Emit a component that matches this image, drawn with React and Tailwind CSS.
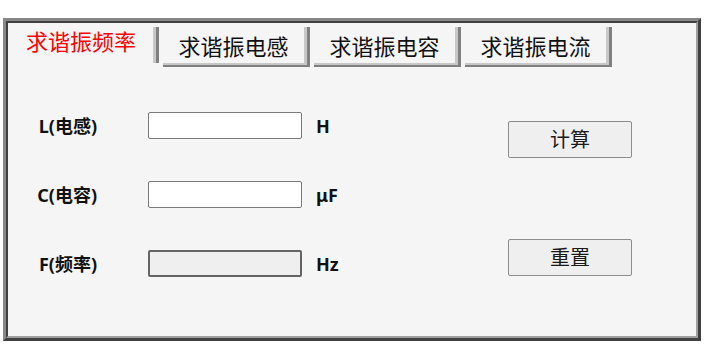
import React from "react";

const cjk = { fontFamily: '"Noto Sans", "Noto Sans CJK SC", sans-serif' };

const tabs = ["求谐振电感", "求谐振电容", "求谐振电流"];

const rows = [
  { label: "L(电感)", unit: "H", readOnly: false },
  { label: "C(电容)", unit: "μF", readOnly: false },
  { label: "F(频率)", unit: "Hz", readOnly: true },
];

function Tab({ text }) {
  return (
    <div className="w-[147px] h-[40px] border-r-[3px] border-b-[2px] border-[#808080]">
      <div className="h-full border-r-[3px] border-b-[2px] border-[#c8c8c8] flex items-start justify-center pt-[5px] text-[22px] leading-[28px] text-[#111]">
        {text}
      </div>
    </div>
  );
}

export default function App() {
  return (
    <div className="w-[704px] h-[350px] bg-white pt-[18px] pl-[3px]" style={cjk}>
      <div className="w-[698px] h-[323px] border-[3px] border-t-[#888888] border-l-[#888888] border-r-[#404040] border-b-[#404040]">
        <div className="h-full border-2 border-t-[#404040] border-l-[#404040] border-r-[#a0a0a0] border-b-[#a0a0a0] bg-[#f5f5f5]">
          {/* tab strip */}
          <div className="flex gap-[4px] pt-[4px] pl-[4px]">
            <div className="w-[147px] h-[36px] border-r-[3px] border-[#808080]">
              <div className="h-full border-r-[3px] border-[#c8c8c8] flex items-start justify-center pr-[3px] pt-[1px] text-[22px] leading-[26px] text-[#ff0000]">
                求谐振频率
              </div>
            </div>
            {tabs.map((t) => (
              <Tab key={t} text={t} />
            ))}
          </div>

          {/* form */}
          <div className="flex mt-[45px]">
            <div className="w-[500px] flex flex-col gap-[42px]">
              {rows.map((r) => (
                <div key={r.label} className="flex items-center h-[27px]">
                  <div className="w-[89px] text-right font-bold text-[18px] leading-[24px] text-[#111]">
                    {r.label}
                  </div>
                  {r.readOnly ? (
                    <div className="ml-[51px] w-[154px] h-[27px] bg-[#efefef] border-2 border-[#646464] rounded-[2px]" />
                  ) : (
                    <div className="ml-[51px] w-[154px] h-[27px] bg-white border border-[#7a7a7a] rounded-[2px]" />
                  )}
                  <div className="ml-[14px] font-bold text-[18px] leading-[24px] text-[#111]">
                    {r.unit}
                  </div>
                </div>
              ))}
            </div>
            <div className="flex flex-col gap-[81px] pt-[9px]">
              <button className="w-[124px] h-[37px] bg-[#efefef] border border-[#8c8c8c] rounded-[2px] text-[20px] leading-[26px] text-[#1a1a1a]">
                计算
              </button>
              <button className="w-[124px] h-[37px] bg-[#efefef] border border-[#8c8c8c] rounded-[2px] text-[20px] leading-[26px] text-[#1a1a1a]">
                重置
              </button>
            </div>
          </div>
        </div>
      </div>
    </div>
  );
}
